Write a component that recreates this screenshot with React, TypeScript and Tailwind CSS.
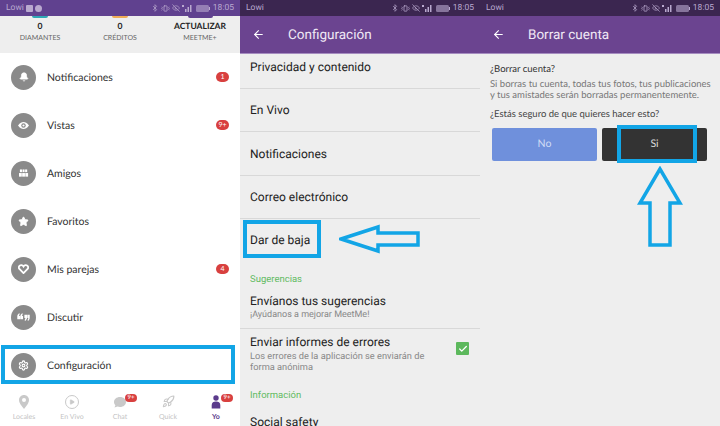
import React from "react";
import { Bell, Star, Settings, Play, Rocket, ArrowLeft, Check, Bluetooth, Vibrate, EyeOff } from "lucide-react";

const StatusIcons = () => (
  <div className="flex items-center gap-[2px] text-[#b9a9cf]">
    <Bluetooth size={8} strokeWidth={2} />
    <Vibrate size={9} strokeWidth={2} />
    <EyeOff size={8} strokeWidth={2} />
    <svg width="11" height="8" viewBox="0 0 11 8">
      <rect x="3" y="5" width="1.5" height="3" fill="currentColor" />
      <rect x="5.5" y="3" width="1.5" height="5" fill="currentColor" />
      <rect x="8" y="1" width="1.5" height="7" fill="currentColor" />
      <rect x="0" y="1" width="2" height="2" fill="currentColor" />
    </svg>
    <svg width="14" height="7" viewBox="0 0 14 7" className="ml-[1px]">
      <rect x="0" y="0" width="13" height="7" rx="1.5" fill="currentColor" opacity="0.6" />
      <rect x="13" y="2" width="1" height="3" fill="currentColor" />
    </svg>
    <span className="ml-[1px] text-[8.5px] leading-none font-['Roboto',sans-serif]">18:05</span>
  </div>
);

const StatusBar = ({ dark, extra }: { dark?: boolean; extra?: boolean }) => (
  <div className={`h-4 shrink-0 flex items-center justify-between pl-[6px] pr-[6px] ${dark ? "bg-[#3b2650]" : "bg-[#60418f]"}`}>
    <div className="flex items-center gap-[2px] text-[8.5px] text-[#b9a9cf] font-['Roboto',sans-serif]">
      <span>Lowi</span>
      {extra && (
        <>
          <span className="w-[7px] h-[7px] bg-[#b9a9cf] rounded-[1px]" />
          <span className="w-[7px] h-[7px] bg-[#b9a9cf] rounded-full" />
        </>
      )}
    </div>
    <StatusIcons />
  </div>
);

const EyeIcon = () => (
  <svg width="11" height="7" viewBox="0 0 22 14">
    <path d="M0 7C4 1.500 7.500 0 11 0S18 1.500 22 7C18 12.500 14.500 14 11 14S4 12.500 0 7Z" fill="white" />
    <circle cx="11" cy="7" r="4.500" fill="#8a8a8a" />
    <circle cx="11" cy="7" r="2.200" fill="white" />
  </svg>
);

const FriendsIcon = () => (
  <svg width="11" height="9" viewBox="0 0 11 10" fill="white">
    <rect x="1.500" y="0.500" width="2.300" height="3" />
    <rect x="4.400" y="0.500" width="2.300" height="3" />
    <rect x="7.300" y="0.500" width="2.300" height="3" />
    <rect x="0.500" y="4.500" width="3.100" height="4" />
    <rect x="4" y="4.500" width="3.100" height="4" />
    <rect x="7.500" y="4.500" width="3.100" height="4" />
  </svg>
);

const HeartIcon = () => (
  <svg width="11" height="10" viewBox="0 0 24 22">
    <path d="M12 20 3 11C0 7 3 2 7.500 2.500 9.500 2.700 11 4 12 5.500 13 4 14.500 2.700 16.500 2.500 21 2 24 7 21 11Z" fill="none" stroke="white" strokeWidth="4" />
  </svg>
);

const QuoteIcon = () => (
  <svg width="13" height="8" viewBox="0 0 14 9" fill="white">
    <path d="M0 7V4C0 2 1 1 2.500 0V2C2 2.500 2 3 2 3.500H3.200V7ZM3.400 7V4C3.400 2 4.400 1 5.900 0V2C5.400 2.500 5.400 3 5.400 3.500H6.500V7Z" />
    <path d="M8 2V5.500H9.100C9.100 6 9 6.500 8.500 7V9C10 8 11 7 11 5V2ZM11.300 2V5.500H12.400C12.400 6 12.300 6.500 11.800 7V9C13.300 8 14 7 14 5V2Z" />
  </svg>
);

const PinIcon = () => (
  <svg width="10" height="14" viewBox="0 0 10 14">
    <path d="M5 0C2.200 0 0 2.200 0 5C0 8.500 5 14 5 14S10 8.500 10 5C10 2.200 7.800 0 5 0Z" fill="#c9c9c9" />
    <circle cx="5" cy="5" r="2" fill="white" />
  </svg>
);

const ChatIcon = () => (
  <svg width="14" height="13" viewBox="0 0 14 13">
    <path d="M7 2C3.500 2 1 4.200 1 7C1 8.300 1.500 9.400 2.400 10.300L1.500 12.500L4.500 11.500C5.300 11.800 6.100 12 7 12C10.500 12 13 9.800 13 7S10.500 2 7 2Z" fill="#c9c9c9" />
  </svg>
);

const menu: { label: string; icon: React.ReactNode; badge?: string }[] = [
  { label: "Notificaciones", icon: <Bell size={10} fill="white" color="white" />, badge: "1" },
  { label: "Vistas", icon: <EyeIcon />, badge: "9+" },
  { label: "Amigos", icon: <FriendsIcon /> },
  { label: "Favoritos", icon: <Star size={11} fill="white" color="white" /> },
  { label: "Mis parejas", icon: <HeartIcon />, badge: "4" },
  { label: "Discutir", icon: <QuoteIcon /> },
  { label: "Configuración", icon: <Settings size={11} color="white" strokeWidth={2.5} /> },
];

const Stat = ({ value, label, color }: { value: string; label: string; color: string }) => (
  <div className="relative w-20 flex flex-col items-center">
    <div className={`h-[2px] rounded-b-full ${color}`} />
    <span className="mt-[1px] text-[8.5px] font-bold leading-[14px] text-[#222]">{value}</span>
    <span className="text-[7px] leading-[10px] text-[#666]">{label}</span>
  </div>
);

const TabItem = ({ label, icon, badge, active }: { label: string; icon: React.ReactNode; badge?: boolean; active?: boolean }) => (
  <div className="relative w-12 flex flex-col items-center">
    <div className="h-[17px] flex items-center justify-center">{icon}</div>
    <span className={`mt-[3px] text-[7px] leading-[9px] ${active ? "text-[#5b3b8c] font-bold" : "text-[#c4c4c4]"}`}>{label}</span>
    {badge && (
      <span className="absolute top-[1px] left-[29px] w-[12px] h-[8px] rounded-full bg-[#d8403f] text-white text-[6px] leading-[8px] text-center">9+</span>
    )}
  </div>
);

const ProfileColumn = () => (
  <div className="relative w-60 h-full flex flex-col bg-white font-['Lato',sans-serif] overflow-hidden">
    <StatusBar extra />
    <div className="h-[37px] shrink-0 bg-[#eeeeee] flex">
      <Stat value="0" label="DIAMANTES" color="w-[16px] bg-[#2fa8b5]" />
      <Stat value="0" label="CRÉDITOS" color="w-[16px] bg-[#f0ac55]" />
      <Stat value="ACTUALIZAR" label="MEETME+" color="w-[25px] bg-[#60418f]" />
    </div>
    <div className="flex-1 flex flex-col">
      {menu.map((item) => (
        <div key={item.label} className="h-12 shrink-0 flex items-center pl-[11px] pr-[11px]">
          <div className="w-[25px] h-[25px] rounded-full bg-[#8a8a8a] flex items-center justify-center">{item.icon}</div>
          <span className="ml-[11px] pt-[4px] text-[10.5px] text-[#333] flex-1">{item.label}</span>
          {item.badge && (
            <span className="w-[13px] h-[10px] rounded-full bg-[#d8403f] text-white text-[7px] leading-[10px] text-center">{item.badge}</span>
          )}
        </div>
      ))}
    </div>
    <div className="absolute left-0 right-0 bottom-0 h-[43px] bg-white flex items-start justify-between pt-[10px]">
      <TabItem label="Locales" icon={<PinIcon />} />
      <TabItem label="En Vivo" icon={<div className="w-[14px] h-[14px] rounded-full border border-[#c9c9c9] flex items-center justify-center"><Play size={6} fill="#c9c9c9" color="#c9c9c9" /></div>} />
      <TabItem label="Chat" badge icon={<ChatIcon />} />
      <TabItem label="Quick" icon={<Rocket size={13} color="#c9c9c9" />} />
      <TabItem label="Yo" active badge icon={
        <svg width="10" height="14" viewBox="0 0 10 14" fill="#5b3b8c">
          <circle cx="5" cy="3" r="2.700" />
          <path d="M0.700 13.500V10C0.700 7.500 2.500 6.500 5 6.500S9.300 7.500 9.300 10V13.500Z" />
        </svg>
      } />
    </div>
    <div className="absolute left-[1px] top-[345px] w-[234px] h-[39px] border-4 border-[#12a5e6]" />
  </div>
);

const AppHeader = ({ title }: { title: string }) => (
  <div className="h-[38px] shrink-0 bg-[#6b4490] border-b border-[#a58cc0] flex items-center pl-[12px] text-white font-['Roboto',sans-serif]">
    <ArrowLeft size={13} strokeWidth={2} />
    <span className="ml-[23px] pt-[2px] text-[13.5px] text-[#f0e8f5]">{title}</span>
  </div>
);

const SettingRow = ({ title, h }: { title: string; h: string }) => (
  <div className={`${h} shrink-0 border-b border-[#d8d8d8] flex items-center pl-[10px] text-[12px] text-[#222]`}>{title}</div>
);

const SettingsColumn = () => (
  <div className="relative w-60 h-full flex flex-col bg-[#eeeeee] font-['Roboto',sans-serif] overflow-hidden">
    <StatusBar dark />
    <AppHeader title="Configuración" />
    <div className="h-[35px] shrink-0 border-b border-[#d8d8d8] flex items-start pl-[10px] pt-[5px] text-[12px] leading-[16px] text-[#222]">Privacidad y contenido</div>
    <SettingRow title="En Vivo" h="h-[43px]" />
    <SettingRow title="Notificaciones" h="h-[44px]" />
    <SettingRow title="Correo electrónico" h="h-[43px]" />
    <div className="h-[42px] shrink-0 flex items-center pl-[10px] text-[12px] text-[#222]">Dar de baja</div>
    <div className="h-[14px] shrink-0 pl-[10px] text-[9.5px] leading-[14px] text-[#62bb62] mt-[12px]">Sugerencias</div>
    <div className="h-[42px] shrink-0 border-b border-[#d8d8d8] pl-[10px] pt-[6px]">
      <div className="text-[12px] leading-[16px] text-[#222]">Envíanos tus sugerencias</div>
      <div className="text-[9px] leading-[12px] text-[#888]">¡Ayúdanos a mejorar MeetMe!</div>
    </div>
    <div className="h-[50px] shrink-0 flex items-start pl-[10px] pr-[11px] pt-[5px]">
      <div className="flex-1">
        <div className="text-[12px] leading-[16px] text-[#222]">Enviar informes de errores</div>
        <div className="text-[9.250px] leading-[11px] text-[#888] w-[190px] mt-[1px]">Los errores de la aplicación se enviarán de forma anónima</div>
      </div>
      <div className="mt-[8px] w-[13px] h-[13px] rounded-[1px] bg-[#5cb85c] flex items-center justify-center">
        <Check size={10} color="white" strokeWidth={3} />
      </div>
    </div>
    <div className="h-[15px] shrink-0 pl-[10px] text-[9.5px] leading-[15px] text-[#62bb62] mt-[9px]">Información</div>
    <div className="pl-[10px] pt-[11px] text-[12px] leading-[16px] text-[#222]">Social safety</div>
    <div className="absolute left-[3px] top-[220px] w-[78px] h-[38px] border-4 border-[#12a5e6]" />
    <svg className="absolute left-[99px] top-[224px]" width="82" height="31" viewBox="0 0 82 31" fill="none">
      <path d="M2 15 L39 3 V9 H79 V21 H39 V27 Z" stroke="#12a5e6" strokeWidth="3.500" />
    </svg>
  </div>
);

const DeleteColumn = () => (
  <div className="relative w-60 h-full flex flex-col bg-[#eeeeee] font-['Lato',sans-serif] overflow-hidden">
    <StatusBar dark />
    <AppHeader title="Borrar cuenta" />
    <div className="pl-[10px] pr-[5px] pt-[10px]">
      <div className="text-[9.5px] leading-[12px] text-[#333]">¿Borrar cuenta?</div>
      <div className="mt-[3px] text-[9.5px] leading-[11px] text-[#777]">Si borras tu cuenta, todas tus fotos, tus publicaciones y tus amistades serán borradas permanentemente.</div>
      <div className="mt-[8px] text-[9.5px] leading-[12px] text-[#444]">¿Estás seguro de que quieres hacer esto?</div>
    </div>
    <div className="mt-[7px] px-[12px] flex gap-[5px]">
      <div className="w-[105px] h-[33px] rounded-[2px] bg-[#6f90dc] flex items-center justify-center text-[10.5px] text-[#cfdcf5]">No</div>
      <div className="w-[105px] h-[33px] rounded-[2px] bg-[#333333] flex items-center justify-center text-[10.5px] text-[#ddd]">Si</div>
    </div>
    <div className="absolute left-[137px] top-[125px] w-[80px] h-[38px] border-4 border-[#12a5e6]" />
    <svg className="absolute left-[157px] top-[166px]" width="46" height="84" viewBox="0 0 46 84" fill="none">
      <path d="M23 3 L3 37 H13 V79 H33 V37 H43 Z" stroke="#12a5e6" strokeWidth="3.500" />
    </svg>
  </div>
);

export default function App() {
  return (
    <div className="w-[720px] h-[426px] flex overflow-hidden bg-white [text-rendering:geometricPrecision]">
      <ProfileColumn />
      <SettingsColumn />
      <DeleteColumn />
    </div>
  );
}
